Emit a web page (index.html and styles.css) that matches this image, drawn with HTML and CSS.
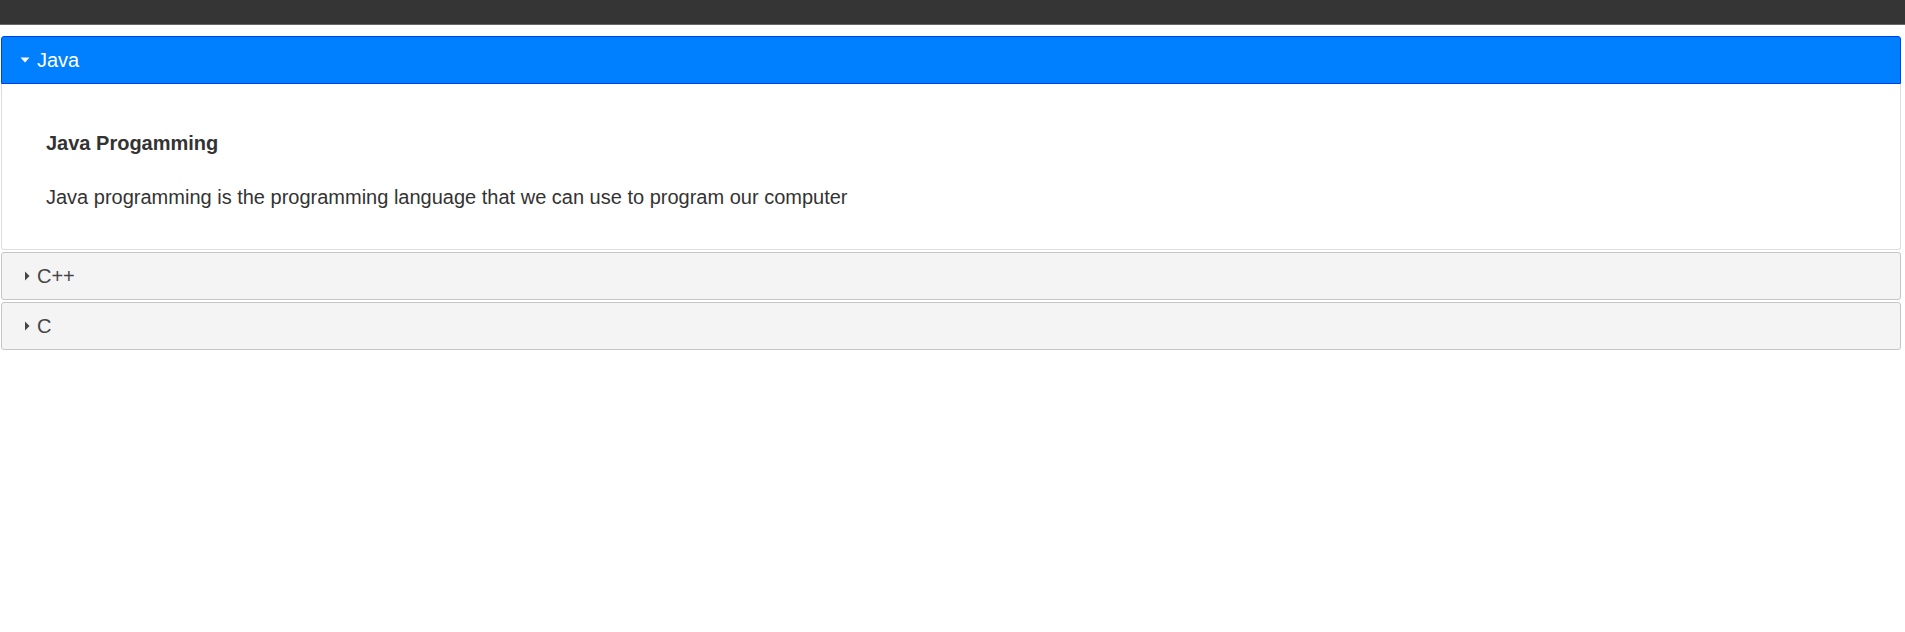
FILE: index.html
```html
<!DOCTYPE html>
<html lang="en">
<head>
<meta charset="utf-8">
<title>Accordion</title>
<link rel="stylesheet" href="styles.css">
</head>
<body>
<div class="topbar"></div>
<div class="accordion">
  <div class="acc-header active">
    <svg class="icon" width="16" height="16" viewBox="0 0 16 16"><polygon points="3.5,5.5 12.5,5.5 8,10.5" fill="#ffffff"/></svg>
    <span>Java</span>
  </div>
  <div class="acc-panel">
    <h4 class="panel-title">Java Progamming</h4>
    <p class="panel-text">Java programming is the programming language that we can use to program our computer</p>
  </div>
  <div class="acc-header">
    <svg class="icon" width="16" height="16" viewBox="0 0 16 16"><polygon points="8,3.5 12.5,8 8,12.5" fill="#454545"/></svg>
    <span>C++</span>
  </div>
  <div class="acc-header">
    <svg class="icon" width="16" height="16" viewBox="0 0 16 16"><polygon points="8,3.5 12.5,8 8,12.5" fill="#454545"/></svg>
    <span>C</span>
  </div>
</div>
</body>
</html>
```
FILE: styles.css
```css
html, body {
  margin: 0;
  padding: 0;
  background: #ffffff;
}
body {
  font-family: "Liberation Sans", Arial, sans-serif;
  font-size: 20px;
  color: #333333;
}
.topbar {
  height: 24px;
  background: #353535;
  border-bottom: 1px solid #686868;
}
.accordion {
  margin: 11px 4px 0 1px;
  display: flex;
  flex-direction: column;
}
.acc-header {
  display: flex;
  align-items: center;
  gap: 4px;
  height: 26px;
  line-height: 26px;
  padding: 10px 10px 10px 15px;
  border: 1px solid #c5c5c5;
  border-radius: 3px;
  background: #f4f4f4;
  color: #454545;
  margin-top: 2px;
  cursor: pointer;
}
.acc-header:first-child {
  margin-top: 0;
}
.acc-header.active {
  background: #007fff;
  border-color: #003eff;
  color: #ffffff;
  border-radius: 3px 3px 0 0;
}
.icon {
  display: block;
  flex: none;
}
.acc-panel {
  border: 1px solid #dddddd;
  border-top: 0;
  border-radius: 0 0 3px 3px;
  padding: 19px 44px;
  background: #ffffff;
  color: #333333;
}
.panel-title {
  margin: 27px 0;
  font-size: 20px;
  line-height: 27px;
  font-weight: bold;
}
.panel-text {
  margin: 0 0 19px;
  line-height: 27px;
}
```
